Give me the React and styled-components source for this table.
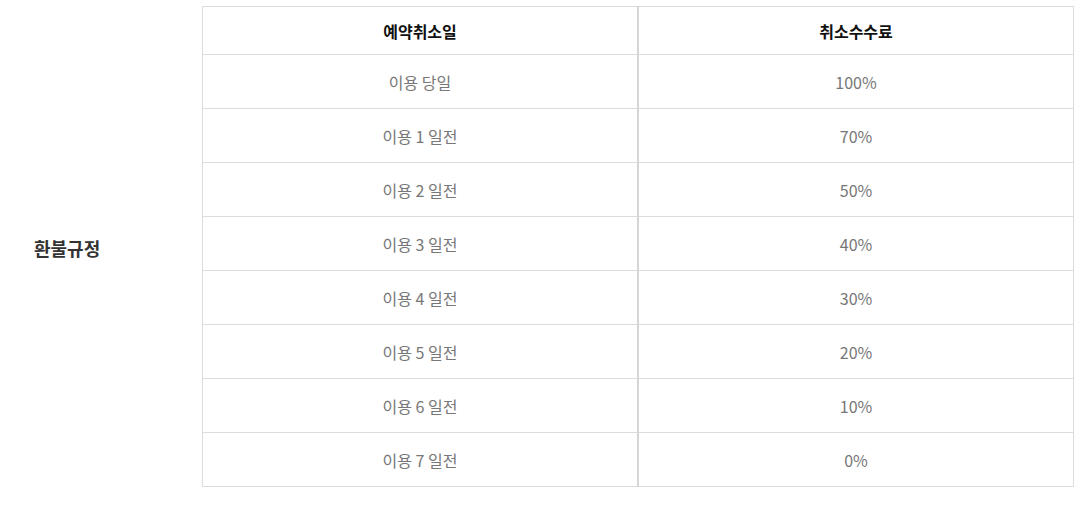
import React from 'react';
import styled, { createGlobalStyle } from 'styled-components';

const rows = [
  { day: '이용 당일', fee: '100%' },
  { day: '이용 1 일전', fee: '70%' },
  { day: '이용 2 일전', fee: '50%' },
  { day: '이용 3 일전', fee: '40%' },
  { day: '이용 4 일전', fee: '30%' },
  { day: '이용 5 일전', fee: '20%' },
  { day: '이용 6 일전', fee: '10%' },
  { day: '이용 7 일전', fee: '0%' },
];

function App() {
  return (
    <>
      <GlobalStyle />
      <Section>
        <Label>환불규정</Label>
        <Table>
          <thead>
            <tr>
              <Th>예약취소일</Th>
              <Th last>취소수수료</Th>
            </tr>
          </thead>
          <tbody>
            {rows.map(row => (
              <tr key={row.day}>
                <Td>{row.day}</Td>
                <Td last>{row.fee}</Td>
              </tr>
            ))}
          </tbody>
        </Table>
      </Section>
    </>
  );
}

export default App;

const GlobalStyle = createGlobalStyle`
  body {
    margin: 0;
    background: #fff;
    font-family: "Noto Sans CJK KR", "Noto Sans", sans-serif;
  }
`;

const Section = styled.div`
  display: grid;
  grid-template-columns: 202px 872px;
  align-items: center;
  padding-top: 6px;
`;

const Label = styled.div`
  padding-left: 34px;
  font-size: 18px;
  font-weight: 700;
  color: #333;
  margin-top: 3px;
`;

const Table = styled.table`
  width: 872px;
  border-collapse: collapse;
  table-layout: fixed;
  border: 1px solid #dcdcdc;
`;

const Th = styled.th`
  height: 47px;
  padding: 0;
  font-size: 16px;
  font-weight: 700;
  color: #111;
  text-align: center;
  border-bottom: 1px solid #dcdcdc;
  border-right: ${p => (p.last ? '0' : '2px solid #d6d6d6')};
`;

const Td = styled.td`
  height: 53px;
  padding: 0;
  font-size: 16px;
  color: #777;
  text-align: center;
  border-bottom: 1px solid #dcdcdc;
  border-right: ${p => (p.last ? '0' : '2px solid #d6d6d6')};
`;
